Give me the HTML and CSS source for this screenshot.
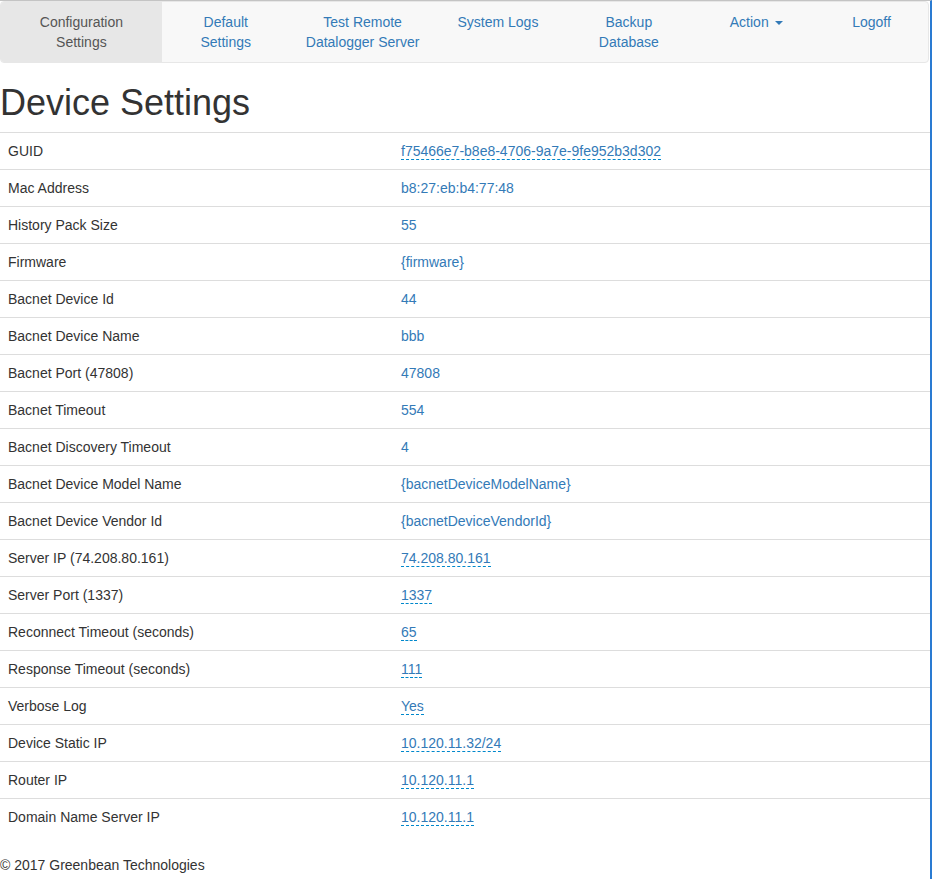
FILE: index.html
```html
<!DOCTYPE html>
<html>
<head>
<meta charset="utf-8">
<link rel="stylesheet" href="styles.css">
</head>
<body>
<div class="page">
  <nav class="navbar">
    <a class="nav-item active w1">Configuration<br>Settings</a>
    <a class="nav-item w2">Default<br>Settings</a>
    <a class="nav-item w3">Test Remote<br>Datalogger Server</a>
    <a class="nav-item w4">System Logs</a>
    <a class="nav-item w5">Backup<br>Database</a>
    <a class="nav-item w6">Action <span class="caret"></span></a>
    <a class="nav-item w7">Logoff</a>
  </nav>
  <h1 class="title">Device Settings</h1>
  <table class="settings">
    <tbody>
      <tr><td class="label">GUID</td><td><a class="val editable">f75466e7-b8e8-4706-9a7e-9fe952b3d302</a></td></tr>
      <tr><td class="label">Mac Address</td><td><a class="val">b8:27:eb:b4:77:48</a></td></tr>
      <tr><td class="label">History Pack Size</td><td><a class="val">55</a></td></tr>
      <tr><td class="label">Firmware</td><td><a class="val">{firmware}</a></td></tr>
      <tr><td class="label">Bacnet Device Id</td><td><a class="val">44</a></td></tr>
      <tr><td class="label">Bacnet Device Name</td><td><a class="val">bbb</a></td></tr>
      <tr><td class="label">Bacnet Port (47808)</td><td><a class="val">47808</a></td></tr>
      <tr><td class="label">Bacnet Timeout</td><td><a class="val">554</a></td></tr>
      <tr><td class="label">Bacnet Discovery Timeout</td><td><a class="val">4</a></td></tr>
      <tr><td class="label">Bacnet Device Model Name</td><td><a class="val">{bacnetDeviceModelName}</a></td></tr>
      <tr><td class="label">Bacnet Device Vendor Id</td><td><a class="val">{bacnetDeviceVendorId}</a></td></tr>
      <tr><td class="label">Server IP (74.208.80.161)</td><td><a class="val editable">74.208.80.161</a></td></tr>
      <tr><td class="label">Server Port (1337)</td><td><a class="val editable">1337</a></td></tr>
      <tr><td class="label">Reconnect Timeout (seconds)</td><td><a class="val editable">65</a></td></tr>
      <tr><td class="label">Response Timeout (seconds)</td><td><a class="val editable">111</a></td></tr>
      <tr><td class="label">Verbose Log</td><td><a class="val editable">Yes</a></td></tr>
      <tr><td class="label">Device Static IP</td><td><a class="val editable">10.120.11.32/24</a></td></tr>
      <tr><td class="label">Router IP</td><td><a class="val editable">10.120.11.1</a></td></tr>
      <tr><td class="label">Domain Name Server IP</td><td><a class="val editable">10.120.11.1</a></td></tr>
    </tbody>
  </table>
  <footer class="footer">© 2017 Greenbean Technologies</footer>
</div>
</body>
</html>
```
FILE: styles.css
```css
html, body {
  margin: 0;
  padding: 0;
  background: #fff;
}
body {
  font-family: "Liberation Sans", Arial, sans-serif;
  font-size: 14px;
  line-height: 20px;
  color: #333;
}
.page {
  width: 930px;
  min-height: 878px;
  border-top: 1px solid #c4c4c4;
  border-right: 2px solid #2a7bd2;
}
.navbar {
  display: flex;
  margin: 0 1px 20px 0;
  background: #f8f8f8;
  border: 1px solid #e7e7e7;
  border-radius: 4px;
  overflow: hidden;
}
.nav-item {
  display: block;
  box-sizing: border-box;
  padding: 10px 0;
  text-align: center;
  color: #337ab7;
  text-decoration: none;
}
.nav-item.active {
  background: #e7e7e7;
  color: #555;
}
.w1 { width: 161px; }
.w2 { width: 128px; }
.w3 { width: 146px; }
.w4 { width: 125px; }
.w5 { width: 137px; }
.w6 { width: 118px; }
.w7 { width: 113px; }
.caret {
  display: inline-block;
  width: 0;
  height: 0;
  margin-left: 2px;
  vertical-align: middle;
  border-top: 4px solid;
  border-left: 4px solid transparent;
  border-right: 4px solid transparent;
}
.title {
  margin: 20px 0 9px;
  font-family: "Liberation Sans", Arial, sans-serif;
  font-size: 36px;
  font-weight: 500;
  line-height: 1.1;
  color: #333;
}
.settings {
  width: 930px;
  border-collapse: collapse;
  border-spacing: 0;
  margin-bottom: 20px;
}
.settings td {
  padding: 8px;
  line-height: 20px;
  border-top: 1px solid #ddd;
  vertical-align: top;
}
.settings td.label {
  width: 377px;
}
.val {
  color: #337ab7;
  text-decoration: none;
}
.val.editable {
  border-bottom: 1px dashed #0088cc;
}
.footer {
  line-height: 20px;
}
```
